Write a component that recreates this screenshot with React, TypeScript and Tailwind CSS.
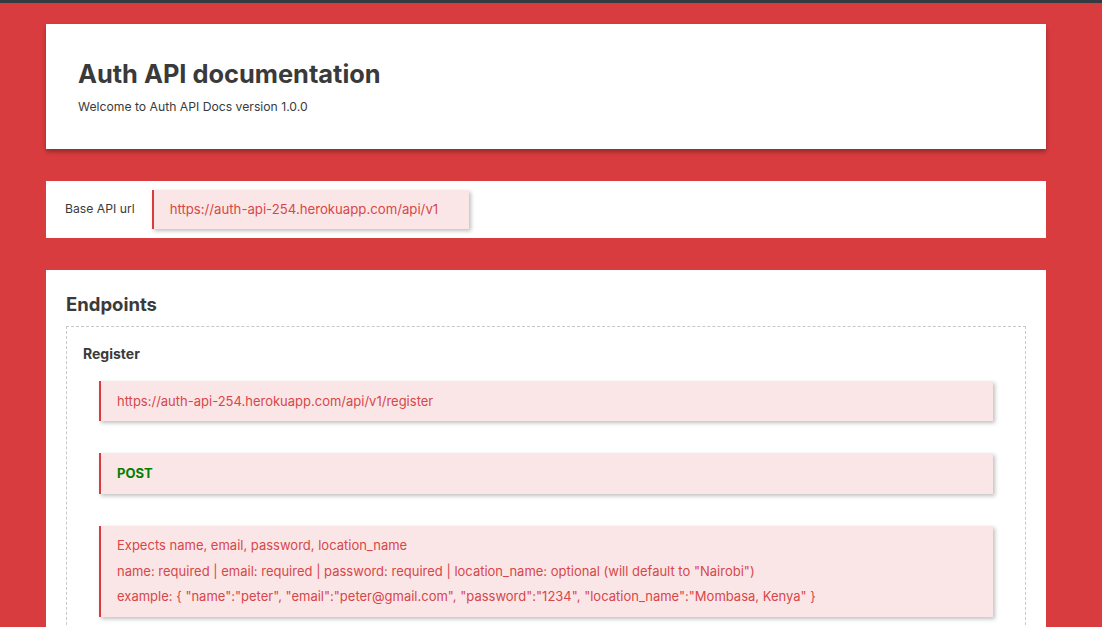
const boxShadow = "shadow-[2px_2px_4px_rgba(0,0,0,0.25)]";

const InfoBox = ({ children, className = "" }: { children: React.ReactNode; className?: string }) => (
  <div className={`mx-4 border-l-2 border-[#d83c3e] bg-[#fae6e6] px-4 text-[13px] ${boxShadow} ${className}`}>
    {children}
  </div>
);

export default function App() {
  return (
    <div className="min-h-screen bg-[#d83c3e] font-['Inter',sans-serif] text-[#3a3a3a]">
      <div className="h-[3px] bg-[#343a40]" />
      <div className="ml-[46px] w-[1000px] pt-[21px] pb-8">
        <header className="h-[125px] bg-white px-8 pt-[35px] shadow-[0_3px_4px_rgba(0,0,0,0.3)]">
          <h1 className="text-[25.4px] font-bold leading-[30px]">Auth API documentation</h1>
          <p className="mt-[9px] text-[12.2px] leading-[18px]">Welcome to Auth API Docs version 1.0.0</p>
        </header>

        <section className="mt-8 flex items-center bg-white px-[19px] py-[9px]">
          <span className="mr-[17px] text-[12.2px]">Base API url</span>
          <div className={`w-[317px] shrink-0 border-l-2 border-[#d83c3e] bg-[#fae6e6] pl-4 text-[13.2px] leading-[39px] text-[#d8464a] ${boxShadow}`}>
            https://auth-api-254.herokuapp.com/api/v1
          </div>
        </section>

        <section className="mt-8 bg-white px-5 pt-[21px] pb-6">
          <h2 className="text-[18.5px] font-bold leading-[26px]">Endpoints</h2>
          <div className="mt-[9px] border border-dashed border-[#c8c8c8] px-4 pt-4 pb-8">
            <h3 className="text-[14px] font-bold leading-[22px]">Register</h3>
            <InfoBox className="mt-4 leading-[40px] text-[#d8464a]">https://auth-api-254.herokuapp.com/api/v1/register</InfoBox>
            <InfoBox className="mt-8 font-bold leading-[41px] text-[#008000]">POST</InfoBox>
            <InfoBox className="mt-8 py-[7px] leading-[25.5px] text-[#d8464a]">
              <p>Expects name, email, password, location_name</p>
              <p>name: required | email: required | password: required | location_name: optional (will default to "Nairobi")</p>
              <p>example: {'{'} "name":"peter", "email":"peter@gmail.com", "password":"1234", "location_name":"Mombasa, Kenya" {'}'}</p>
            </InfoBox>
          </div>
        </section>
      </div>
    </div>
  );
}
